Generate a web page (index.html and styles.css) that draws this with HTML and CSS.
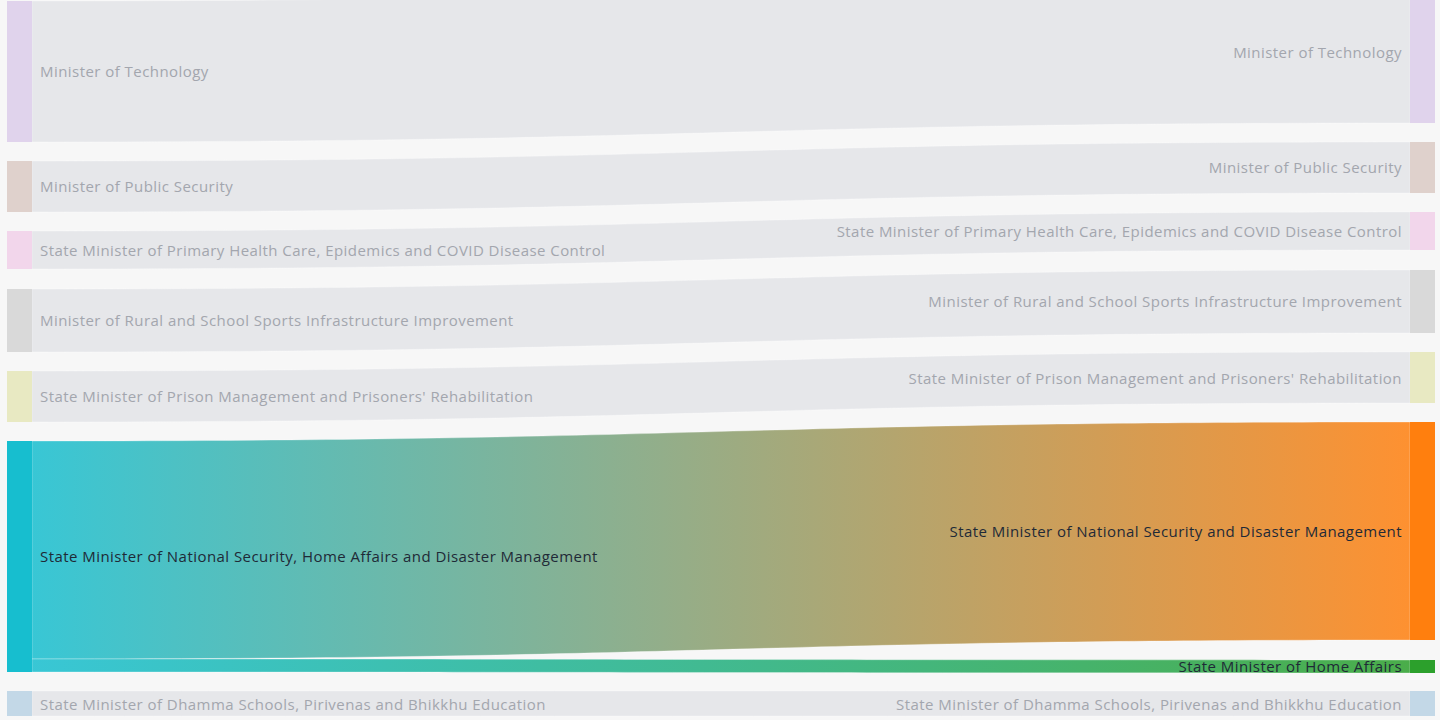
FILE: index.html
```html
<!DOCTYPE html>
<html lang="en">
<head>
<meta charset="utf-8">
<title>Sankey</title>
<link rel="stylesheet" href="styles.css">
</head>
<body>
<svg class="sankey" width="1440" height="720" viewBox="0 0 1440 720" xmlns="http://www.w3.org/2000/svg">
  <defs>
    <linearGradient id="g-nat" gradientUnits="userSpaceOnUse" x1="32" y1="0" x2="1410" y2="0">
      <stop offset="0" stop-color="#17becf"/>
      <stop offset="1" stop-color="#ff7f0e"/>
    </linearGradient>
    <linearGradient id="g-home" gradientUnits="userSpaceOnUse" x1="32" y1="0" x2="1410" y2="0">
      <stop offset="0" stop-color="#17becf"/>
      <stop offset="1" stop-color="#2ca02c"/>
    </linearGradient>
  </defs>

  <g class="links">
    <path class="link link-faded" d="M32,1 C721,1 721,-18 1410,-18 L1410,123 C721,123 721,142 32,142 Z"/>
    <path class="link link-faded" d="M32,161 C721,161 721,142 1410,142 L1410,193 C721,193 721,212 32,212 Z"/>
    <path class="link link-faded" d="M32,231 C721,231 721,212 1410,212 L1410,250 C721,250 721,269 32,269 Z"/>
    <path class="link link-faded" d="M32,289 C721,289 721,270 1410,270 L1410,333 C721,333 721,352 32,352 Z"/>
    <path class="link link-faded" d="M32,371 C721,371 721,352 1410,352 L1410,403 C721,403 721,422 32,422 Z"/>
    <path class="link link-active" fill="url(#g-nat)" d="M32,441 C721,441 721,422 1410,422 L1410,640 C721,640 721,659 32,659 Z"/>
    <path class="link link-active" fill="url(#g-home)" d="M32,659 C721,659 721,660 1410,660 L1410,673 C721,673 721,672 32,672 Z"/>
    <path class="link link-faded" d="M32,691 C721,691 721,691 1410,691 L1410,716 C721,716 721,716 32,716 Z"/>
  </g>

  <g class="nodes">
    <rect class="node n-tech" x="7" y="1" width="25" height="141"/>
    <rect class="node n-pubsec" x="7" y="161" width="25" height="51"/>
    <rect class="node n-health" x="7" y="231" width="25" height="38"/>
    <rect class="node n-rural" x="7" y="289" width="25" height="63"/>
    <rect class="node n-prison" x="7" y="371" width="25" height="51"/>
    <rect class="node n-natsec" x="7" y="441" width="25" height="231"/>
    <rect class="node n-dhamma" x="7" y="691" width="25" height="25"/>

    <rect class="node n-tech" x="1410" y="-18" width="25" height="141"/>
    <rect class="node n-pubsec" x="1410" y="142" width="25" height="51"/>
    <rect class="node n-health" x="1410" y="212" width="25" height="38"/>
    <rect class="node n-rural" x="1410" y="270" width="25" height="63"/>
    <rect class="node n-prison" x="1410" y="352" width="25" height="51"/>
    <rect class="node n-orange" x="1410" y="422" width="25" height="218"/>
    <rect class="node n-green" x="1410" y="660" width="25" height="13"/>
    <rect class="node n-dhamma" x="1410" y="691" width="25" height="25"/>
  </g>

  <g class="labels">
    <text class="label label-faded label-left" x="40" y="71">Minister of Technology</text>
    <text class="label label-faded label-left" x="40" y="186">Minister of Public Security</text>
    <text class="label label-faded label-left" x="40" y="249.5">State Minister of Primary Health Care, Epidemics and COVID Disease Control</text>
    <text class="label label-faded label-left" x="40" y="320">Minister of Rural and School Sports Infrastructure Improvement</text>
    <text class="label label-faded label-left" x="40" y="396">State Minister of Prison Management and Prisoners' Rehabilitation</text>
    <text class="label label-active label-left" x="40" y="556">State Minister of National Security, Home Affairs and Disaster Management</text>
    <text class="label label-faded label-left" x="40" y="703.5">State Minister of Dhamma Schools, Pirivenas and Bhikkhu Education</text>

    <text class="label label-faded label-right" x="1402" y="52">Minister of Technology</text>
    <text class="label label-faded label-right" x="1402" y="167">Minister of Public Security</text>
    <text class="label label-faded label-right" x="1402" y="230.5">State Minister of Primary Health Care, Epidemics and COVID Disease Control</text>
    <text class="label label-faded label-right" x="1402" y="301">Minister of Rural and School Sports Infrastructure Improvement</text>
    <text class="label label-faded label-right" x="1402" y="377.5">State Minister of Prison Management and Prisoners' Rehabilitation</text>
    <text class="label label-active label-right" x="1402" y="531">State Minister of National Security and Disaster Management</text>
    <text class="label label-active label-right" x="1402" y="666">State Minister of Home Affairs</text>
    <text class="label label-faded label-right" x="1402" y="703.5">State Minister of Dhamma Schools, Pirivenas and Bhikkhu Education</text>
  </g>
</svg>
</body>
</html>
```

FILE: styles.css
```css
html, body {
  margin: 0;
  padding: 0;
  background: #f7f7f7;
  overflow: hidden;
}

.sankey {
  display: block;
  width: 1440px;
  height: 720px;
}

.link {
  stroke: #ffffff;
  stroke-opacity: 0.5;
  stroke-width: 0.6;
}

.link-faded {
  fill: #e6e7ea;
}

.link-active {
  fill-opacity: 0.85;
}

.node {
  stroke: none;
}

.n-tech { fill: #e0d3ec; }
.n-pubsec { fill: #dfd1cc; }
.n-health { fill: #f2d6eb; }
.n-rural { fill: #d9d9d9; }
.n-prison { fill: #e8e9c2; }
.n-natsec { fill: #17becf; }
.n-orange { fill: #ff7f0e; }
.n-green { fill: #2ca02c; }
.n-dhamma { fill: #c3d8e7; }

.label {
  font-family: "Open Sans", "Noto Sans", sans-serif;
  font-size: 15px;
  letter-spacing: 0.45px;
  dominant-baseline: central;
}

.label-left { text-anchor: start; }
.label-right { text-anchor: end; }

.label-faded { fill: #a3a6ae; }
.label-active { fill: #1f2a37; }
```
